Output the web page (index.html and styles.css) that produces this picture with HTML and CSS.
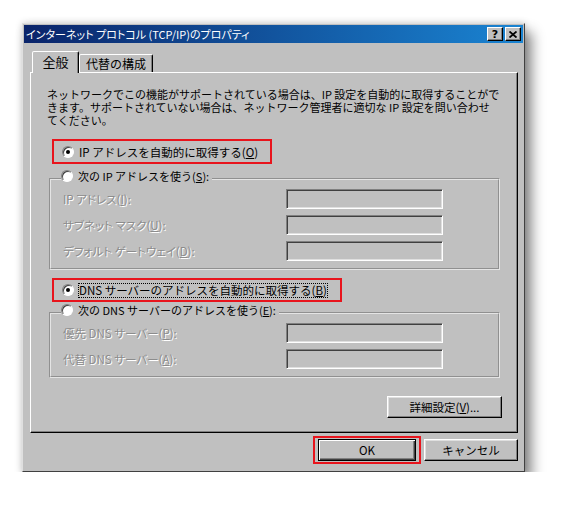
FILE: index.html
```html
<!DOCTYPE html>
<html>
<head>
<meta charset="utf-8">
<link rel="stylesheet" href="styles.css">
</head>
<body>
<div class="window">
  <div class="titlebar">
    <span class="title">インターネット プロトコル (TCP/IP)のプロパティ</span>
    <div class="caption-buttons">
      <span class="cbtn">?</span>
      <span class="cbtn">
        <svg width="8" height="7" viewBox="0 0 8 7"><path d="M0.5 0.5 L7.5 6.5 M7.5 0.5 L0.5 6.5" stroke="#000" stroke-width="1.8"/></svg>
      </span>
    </div>
  </div>

  <div class="tabs">
    <div class="tab active">全般</div>
    <div class="tab">代替の構成</div>
  </div>

  <div class="panel">
    <p class="intro">ネットワークでこの機能がサポートされている場合は、IP 設定を自動的に取得することがで<br>きます。サポートされていない場合は、ネットワーク管理者に適切な IP 設定を問い合わせ<br>てください。</p>

    <div class="option marked first">
      <span class="radio checked"></span>
      <span>IP アドレスを自動的に取得する(<u>O</u>)</span>
    </div>

    <fieldset class="group">
      <legend><span class="radio"></span><span>次の IP アドレスを使う(<u>S</u>):</span></legend>
      <div class="field-row"><span class="label">IP アドレス(<u>I</u>):</span><span class="field"></span></div>
      <div class="field-row"><span class="label">サブネット マスク(<u>U</u>):</span><span class="field"></span></div>
      <div class="field-row"><span class="label">デフォルト ゲートウェイ(<u>D</u>):</span><span class="field"></span></div>
    </fieldset>

    <div class="option marked second">
      <span class="radio checked"></span>
      <span class="focus">DNS サーバーのアドレスを自動的に取得する(<u>B</u>)</span>
    </div>

    <fieldset class="group dns">
      <legend><span class="radio"></span><span>次の DNS サーバーのアドレスを使う(<u>E</u>):</span></legend>
      <div class="field-row"><span class="label">優先 DNS サーバー(<u>P</u>):</span><span class="field"></span></div>
      <div class="field-row"><span class="label">代替 DNS サーバー(<u>A</u>):</span><span class="field"></span></div>
    </fieldset>

    <div class="advanced-row">
      <button class="btn advanced">詳細設定(<u>V</u>)...</button>
    </div>
  </div>

  <div class="footer">
    <div class="default-mark"><button class="btn default">OK</button></div>
    <button class="btn cancel">キャンセル</button>
  </div>
</div>
</body>
</html>
```

FILE: styles.css
```css
html, body {
  margin: 0;
  padding: 0;
  background: #fff;
}

body {
  font-family: "Noto Sans CJK JP", sans-serif;
  font-size: 11px;
  color: #000;
}

.window {
  width: 499px;
  margin: 23px 0 0 22px;
  padding: 1px;
  border: 1px solid;
  border-color: #dfdfdf #404040 #404040 #dfdfdf;
  background: #c0c0c0;
  box-shadow: 7px 9px 12px rgba(0, 0, 0, 0.45), 0 0 7px rgba(0, 0, 0, 0.18);
}

.titlebar {
  height: 18px;
  display: flex;
  align-items: center;
  justify-content: space-between;
  padding: 0 2px;
  background: linear-gradient(90deg, #0a246a, #1a84d2);
  color: #fff;
}

.title {
  font-size: 11px;
  font-feature-settings: "palt";
  line-height: 18px;
  white-space: nowrap;
}

.caption-buttons {
  display: flex;
  gap: 2px;
}

.cbtn {
  width: 16px;
  height: 14px;
  box-sizing: border-box;
  display: flex;
  align-items: center;
  justify-content: center;
  background: #c0c0c0;
  border: 1px solid;
  border-color: #fff #000 #000 #fff;
  box-shadow: inset -1px -1px 0 #808080;
  color: #000;
  font: bold 11px "DejaVu Sans", sans-serif;
}

.tabs {
  display: flex;
  align-items: flex-end;
  margin: 8px 0 -1px 8px;
}

.tab {
  height: 18px;
  box-sizing: border-box;
  margin-bottom: 1px;
  padding: 0 6px;
  border: 1px solid;
  border-bottom: none;
  border-color: #fff #000 transparent #fff;
  border-radius: 2px 2px 0 0;
  box-shadow: inset -1px 0 0 #808080;
  background: #c0c0c0;
  font-size: 12px;
  line-height: 17px;
  white-space: nowrap;
}

.tab.active {
  position: relative;
  z-index: 1;
  width: 47px;
  height: 22px;
  margin-bottom: 0;
  padding: 0;
  text-align: center;
  font-size: 13px;
  line-height: 20px;
}

.panel {
  margin: 0 5px 0 6px;
  padding: 15px 17px 14px 18px;
  border: 1px solid;
  border-color: #fff #000 #000 #fff;
  box-shadow: inset -1px -1px 0 #808080;
}

.intro {
  margin: 0 0 0 -2px;
  line-height: 13px;
  white-space: nowrap;
}

.option {
  display: flex;
  align-items: center;
  gap: 5px;
  height: 24px;
  box-sizing: border-box;
  margin-left: 3px;
  padding: 0 0 0 8px;
  font-size: 11.5px;
  white-space: nowrap;
}

.option.marked {
  border: 2px solid #e8141c;
}

.option.first {
  width: 220px;
  height: 25px;
  margin-top: 12px;
}

.option.second {
  width: 290px;
  margin-top: 8px;
}

.focus {
  outline: 1px dotted #000;
  line-height: 13px;
}

.radio {
  width: 12px;
  height: 12px;
  box-sizing: border-box;
  flex: none;
  display: flex;
  align-items: center;
  justify-content: center;
  border-radius: 50%;
  background: #fff;
  border: 1px solid;
  border-color: #808080 #fff #fff #808080;
  box-shadow: inset 1px 1px 0 #404040;
}

.radio.checked::after {
  content: "";
  width: 4px;
  height: 4px;
  border-radius: 50%;
  background: #000;
}

.group {
  margin: 5px 0 0;
  padding: 0 12px 7px;
  border: 2px groove #e4e4e4;
  min-width: 0;
}

.group.dns {
  margin-top: 1px;
}

.group legend {
  display: flex;
  align-items: center;
  gap: 5px;
  margin-left: -2px;
  padding: 0 3px 6px 0;
  line-height: 14px;
  white-space: nowrap;
}

.field-row {
  display: grid;
  grid-template-columns: 223px 157px;
  align-items: center;
  height: 20px;
}

.field-row + .field-row {
  margin-top: 6px;
}

.label {
  font-size: 11.5px;
  font-feature-settings: "palt";
  color: #8c8c8c;
  text-shadow: 1px 1px 0 #fff;
  white-space: nowrap;
}

.field {
  height: 20px;
  box-sizing: border-box;
  border: 1px solid;
  border-color: #808080 #fff #fff #808080;
  box-shadow: inset 1px 1px 0 #404040, inset -1px -1px 0 #dfdfdf;
}

.advanced-row {
  display: flex;
  justify-content: flex-end;
  margin: 18px -2px 0 0;
}

.btn {
  height: 22px;
  box-sizing: border-box;
  padding: 0;
  background: #c0c0c0;
  border: 1px solid;
  border-color: #fff #000 #000 #fff;
  box-shadow: inset -1px -1px 0 #808080, inset 1px 1px 0 #dfdfdf;
  font: inherit;
  font-size: 11.5px;
  color: #000;
}

.btn.advanced {
  width: 115px;
}

.footer {
  display: flex;
  justify-content: flex-end;
  align-items: center;
  gap: 3px;
  margin: 3px 5px 0 0;
  padding-bottom: 6px;
}

.default-mark {
  display: flex;
  border: 2px solid #e8141c;
  padding: 1px 3px;
}

.btn.default {
  width: 98px;
  border-color: #000;
  box-shadow: inset 1px 1px 0 #fff, inset -1px -1px 0 #404040, inset -2px -2px 0 #808080;
}

.btn.cancel {
  width: 94px;
}
```
